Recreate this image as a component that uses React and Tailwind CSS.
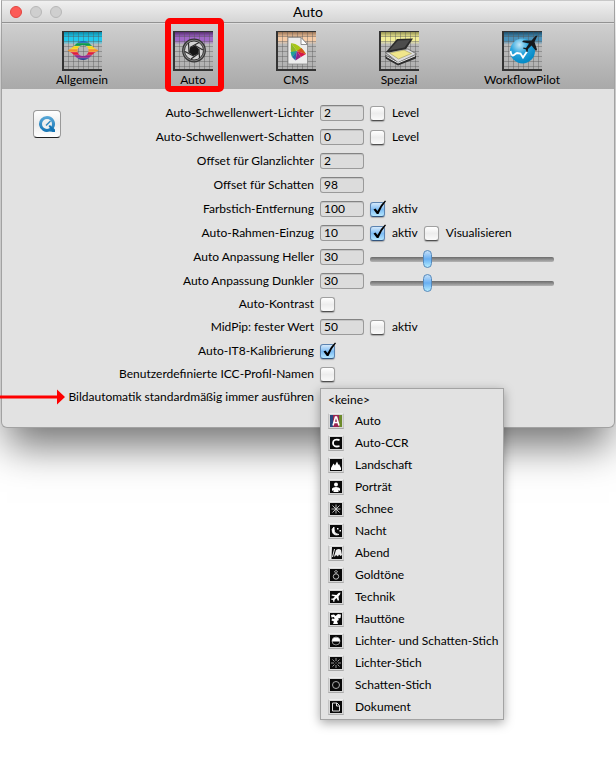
import React from "react";

function GridTile({ id, top, mid, children }) {
  return (
    <svg width="40" height="40" viewBox="0 0 40 40" aria-hidden="true" className="shrink-0">
      <defs>
        <linearGradient id={id} x1="0" y1="0" x2="0" y2="1">
          <stop offset="0" stopColor={top} />
          <stop offset="0.16" stopColor={mid} />
          <stop offset="0.24" stopColor={mid} />
          <stop offset="0.34" stopColor="#bababa" />
          <stop offset="1" stopColor="#b0b0b0" />
        </linearGradient>
      </defs>
      <rect width="40" height="40" fill={`url(#${id})`} />
      <path
        d="M6.500 0V40M11.500 0V40M16.500 0V40M21.500 0V40M26.500 0V40M31.500 0V40M36.500 0V40M0 5.500H40M0 10.500H40M0 15.500H40M0 20.500H40M0 25.500H40M0 30.500H40M0 35.500H40"
        stroke="#555"
        strokeOpacity="0.4"
      />
      <path d="M0 0H40V1H2V38H40V40H0Z" fill="#333" />
      {children}
    </svg>
  );
}

function EyeIcon() {
  return (
    <GridTile id="tile-eye" top="#087f9c" mid="#22c8ec">
      <clipPath id="eye-shape">
        <path d="M5.500 19.500Q10 17.500 13 14Q16.500 10 21 10Q25.500 10 29 14Q32 17.500 36.500 19.500Q32 21.500 29 25Q25.500 29 21 29Q16.500 29 13 25Q10 21.500 5.500 19.500Z" />
      </clipPath>
      <g clipPath="url(#eye-shape)">
        <rect x="5" y="9" width="32" height="3" fill="#1668b5" />
        <rect x="5" y="12" width="32" height="3" fill="#0b9a4d" />
        <rect x="5" y="15" width="32" height="3" fill="#f4d31c" />
        <rect x="5" y="18" width="32" height="3" fill="#f2902a" />
        <rect x="5" y="21" width="32" height="3" fill="#de1f3c" />
        <rect x="5" y="24" width="32" height="3" fill="#8d2a8e" />
        <rect x="5" y="27" width="32" height="4" fill="#2b3f94" />
        <path d="M5 12H37M5 15H37M5 18H37M5 21H37M5 24H37M5 27H37" stroke="#fff" strokeOpacity="0.4" strokeWidth="0.600" />
      </g>
      <circle cx="21" cy="19.500" r="5.500" fill="#b6b6b6" />
      <path d="M21.500 14V25M16.500 17V22M15.500 20.500H26.500M18 15.500H24" stroke="#555" strokeOpacity="0.4" />
    </GridTile>
  );
}

function ShutterIcon() {
  return (
    <GridTile id="tile-shutter" top="#4b2263" mid="#a068c8">
      <circle cx="21" cy="19.500" r="11.300" fill="#8a8a8a" stroke="#333" strokeWidth="1.200" />
      <circle cx="21" cy="19.500" r="9.500" fill="#d2d2d2" stroke="#333" strokeWidth="1" />
      <path d="M17 16.500L22 14.500L26 18L25.500 22.500L20.500 25L16 21.500Z" fill="#171717" />
      <path
        d="M17 16.500L26 11.500M22 14.500L30 19M26 18L26.500 27M25.500 22.500L18 28M20.500 25L12 20.500M16 21.500L15.500 12"
        stroke="#2a2a2a"
        strokeWidth="1.200"
      />
    </GridTile>
  );
}

function CmsIcon() {
  return (
    <GridTile id="tile-cms" top="#8a6547" mid="#f5cba6">
      <path d="M12 6.500H25L31.500 13.500V33H12Z" fill="#ececec" stroke="#8a8a8a" strokeWidth="0.800" />
      <path d="M25 6.500V13.500H31.500Z" fill="#fff" stroke="#777" strokeWidth="0.800" />
      <path d="M15 12Q24 13 30 23L21 20Z" fill="#a8c616" />
      <path d="M15 12L21 20L16 26Q14 19 15 12Z" fill="#8fb728" />
      <path d="M21 20L14.500 21L16 26Z" fill="#1ba39a" />
      <path d="M21 20L16 26L19.500 29.500Z" fill="#2469ae" />
      <path d="M21 20L19.500 29.500L25 26Z" fill="#922286" />
      <path d="M21 20L25 26L30 23Z" fill="#d91648" />
      <path d="M21 20L25.500 17L30 23Z" fill="#d9541e" />
    </GridTile>
  );
}

function ScannerIcon() {
  return (
    <GridTile id="tile-scanner" top="#858345" mid="#f2ee98">
      <path d="M6.500 24L19 31V34.500L6.500 27.500ZM19 31L37 24.500V27.500L19 34.500Z" fill="#2d2d2d" />
      <path d="M6.500 21.500L12 19L29 18L37.500 23L19 31.500Z" fill="#dedede" stroke="#555" strokeWidth="0.700" />
      <path d="M10.500 22L25 19L32.500 22.500L19.500 28Z" fill="#f0e68b" stroke="#8a864f" strokeWidth="0.500" />
      <path d="M7 21L18 8L34 7.500L27 18L10 21.500Z" fill="#2b2b2b" />
      <path d="M10 19.500L19 9.500L31 9L25.500 16.500Z" fill="#4c4c4c" />
      <path d="M7.500 25.500L19 32L36 25" stroke="#eee" fill="none" />
    </GridTile>
  );
}

function PilotIcon() {
  return (
    <GridTile id="tile-pilot" top="#14425d" mid="#4990b8">
      <radialGradient id="globe" cx="0.380" cy="0.250" r="0.700">
        <stop offset="0" stopColor="#c4e8f8" />
        <stop offset="0.500" stopColor="#2ba5dd" />
        <stop offset="1" stopColor="#078cc8" />
      </radialGradient>
      <circle cx="20.500" cy="20" r="12.500" fill="url(#globe)" />
      <path d="M8.500 20Q9.500 26 12 24T15 22L18.500 22.500L21 26.500L25 20.500" fill="none" stroke="#fff" strokeWidth="1.800" />
      <path
        d="M35.500 4.500L33.500 5L29.500 9.500L21.500 9.500L20 11L27 12.500L24 17L21.500 16.500L21 17.500L24 18.500L24.500 21L25.500 21L26 18L29.500 14.500L34 20L35 18.500L32.500 11Z"
        fill="#16191d"
      />
    </GridTile>
  );
}

const tabs = [
  { label: "Allgemein", icon: <EyeIcon />, width: "w-14" },
  { label: "Auto", icon: <ShutterIcon />, width: "w-10", marked: true },
  { label: "CMS", icon: <CmsIcon />, width: "w-10" },
  { label: "Spezial", icon: <ScannerIcon />, width: "w-10" },
  { label: "WorkflowPilot", icon: <PilotIcon />, width: "w-20" },
];

const presets = [
  {
    label: "Auto",
    glyph: (
      <>
        <path d="M0 0H4V12H0Z" fill="#28477e" />
        <path d="M3 0H9V12H3Z" fill="#9a2450" />
        <path d="M9 0H12V12H9Z" fill="#6d8b2b" />
        <path d="M3 10.500L5.500 2H6.500L9 10.500M4 7.500H8" fill="none" stroke="#fff" strokeWidth="1.600" />
      </>
    ),
  },
  { label: "Auto-CCR", glyph: <path d="M9.500 3Q3 1.500 3 6T9.500 9.200" fill="none" stroke="#fff" strokeWidth="1.800" /> },
  { label: "Landschaft", glyph: <path d="M1 11V9L3.500 4.500L5 6.500L7 2.500L8.500 6L9 5L11 9V11Z" fill="#fff" /> },
  {
    label: "Porträt",
    glyph: (
      <>
        <circle cx="6" cy="3.500" r="2" fill="#fff" />
        <path d="M2 10V7.500Q3 6 6 6T10 7.500V10L8.500 9V11H3.500V9Z" fill="#fff" />
      </>
    ),
  },
  { label: "Schnee", glyph: <path d="M6 1.500V10.500M1.500 6H10.500M2.500 2.500L9.500 9.500M9.500 2.500L2.500 9.500" stroke="#ccc" strokeWidth="0.900" /> },
  {
    label: "Nacht",
    glyph: (
      <>
        <path d="M4 2Q1 4 2.500 7.500T9 9.500Q5 9 4.500 6.500T4 2Z" fill="#fff" stroke="#fff" strokeWidth="0.800" />
        <path d="M7 3H8.500V4.500H7ZM9.500 5H11V6.500H9.500Z" fill="#fff" />
      </>
    ),
  },
  {
    label: "Abend",
    glyph: <path d="M0 0H2L1.500 12H0ZM4 2L5 2L3 10H2ZM6 3Q9 1 11 3L12 8L10.500 9L9 7.500L8 9.500L6 8L5 9.500H4Z" fill="#eee" />,
  },
  {
    label: "Goldtöne",
    glyph: (
      <>
        <circle cx="6" cy="7.500" r="2.700" fill="none" stroke="#bbb" />
        <path d="M4.500 2.500L6 1.500L7.500 2.500L6 4.500Z" fill="none" stroke="#bbb" strokeWidth="0.900" />
      </>
    ),
  },
  { label: "Technik", glyph: <path d="M10.500 1.500L8.500 2L6.500 4L2 3.500L1.500 4.500L5 5.500L3 7.500H1.500L1 8.500L3 9L3.500 11L4.500 10.500V9L6.500 7L8 10L9 9L8.500 5.500L10 3.500Z" fill="#fff" /> },
  {
    label: "Hauttöne",
    glyph: <path d="M1 2L4 1.500L5.500 3L8 1L11 1.500L10.500 5L8 5.500L9 7L7 8L8 11H3L4 8.500L1.500 7.500L2 5.500L4.500 6L4 4L1.500 4.500Z" fill="#fff" />,
  },
  {
    label: "Lichter- und Schatten-Stich",
    glyph: (
      <>
        <circle cx="6" cy="6" r="4" fill="none" stroke="#ccc" strokeWidth="0.700" />
        <path d="M2 6.500A4 4 0 0 1 10 6.500Z" fill="#fff" />
      </>
    ),
  },
  {
    label: "Lichter-Stich",
    glyph: (
      <path d="M6 1V4M6 8V11M1 6H4M8 6H11M2.500 2.500L4.500 4.500M7.500 7.500L9.500 9.500M9.500 2.500L7.500 4.500M4.500 7.500L2.500 9.500M5.500 6H6.500" stroke="#bbb" strokeWidth="0.800" />
    ),
  },
  { label: "Schatten-Stich", glyph: <circle cx="6" cy="6" r="3.500" fill="none" stroke="#bbb" strokeWidth="0.900" /> },
  { label: "Dokument", glyph: <path d="M2.500 2H7L9.500 4.500V10H2.500ZM6.500 2V5H9.500" fill="none" stroke="#ddd" /> },
];

function Check({ id, label, name, on }) {
  return (
    <span className="flex items-center gap-[7px]">
      <span className="relative flex">
        <input
          id={id}
          type="checkbox"
          defaultChecked={on}
          aria-label={label ? undefined : name}
          className="peer size-[15px] appearance-none rounded-[3px] border border-[#a0a0a0] border-b-[#505050] bg-linear-to-b from-white via-[#ededed] to-[#fafafa] shadow-[0_1px_1px_rgba(0,0,0,0.25)] checked:border-[#5c83b0] checked:border-b-[#33557f] checked:from-[#d5e9fb] checked:via-[#7dbcf3] checked:to-[#b5e6ff]"
        />
        <svg
          viewBox="0 0 17 17"
          aria-hidden="true"
          className="pointer-events-none absolute -top-0.5 left-0 hidden size-[17px] peer-checked:block"
        >
          <path d="M3.500 9.500L5.500 8.500L7.500 11Q10.500 4.500 15 0.500L16 1.300Q11.500 6.500 8.500 14H6.800Z" fill="#000" />
        </svg>
      </span>
      {label && <label htmlFor={id}>{label}</label>}
    </span>
  );
}

function Field({ id, value }) {
  return (
    <input
      id={id}
      type="text"
      defaultValue={value}
      className="h-4 w-11 rounded-[3px] border border-[#9a9a9a] border-t-[#838383] bg-[#dcdcdc] px-[3px] pb-0.5 text-[12px] leading-3 shadow-[inset_0_1px_0_#c4c4c4] outline-none"
    />
  );
}

function Slider({ name }) {
  return (
    <input
      type="range"
      min="0"
      max="100"
      defaultValue="30"
      aria-label={name}
      className="mt-1 h-[18px] w-[184px] appearance-none bg-transparent [&::-webkit-slider-runnable-track]:h-[5px] [&::-webkit-slider-runnable-track]:rounded-[2px] [&::-webkit-slider-runnable-track]:bg-linear-to-b [&::-webkit-slider-runnable-track]:from-[#6c6c6c] [&::-webkit-slider-runnable-track]:to-[#b5b5b5] [&::-webkit-slider-thumb]:-mt-[7px] [&::-webkit-slider-thumb]:h-[18px] [&::-webkit-slider-thumb]:w-[9px] [&::-webkit-slider-thumb]:appearance-none [&::-webkit-slider-thumb]:rounded-full [&::-webkit-slider-thumb]:border [&::-webkit-slider-thumb]:border-[#5589bb] [&::-webkit-slider-thumb]:bg-linear-to-b [&::-webkit-slider-thumb]:from-[#c4e0f9] [&::-webkit-slider-thumb]:via-[#68aff2] [&::-webkit-slider-thumb]:to-[#b3ecff]"
    />
  );
}

function Row({ label, htmlFor, short, children }) {
  return (
    <div className={`relative flex items-center ${short ? "h-[22px]" : "h-6"}`}>
      <label htmlFor={htmlFor} className="mr-1.5 w-[250px] shrink-0 text-right whitespace-nowrap">
        {label}
      </label>
      <div className="flex items-center gap-1.5">{children}</div>
    </div>
  );
}

function PresetMenu() {
  return (
    <ul
      id="preset"
      role="listbox"
      aria-label="Bildautomatik"
      className="absolute top-[3px] left-64 z-10 w-[184px] border border-[#a3a3a3] bg-[#e2e2e2] py-px shadow-[0_3px_10px_rgba(0,0,0,0.35)]"
    >
      <li role="option" aria-selected="false" className="flex h-5 items-center pl-[7px]">
        &lt;keine&gt;
      </li>
      {presets.map((p) => (
        <li key={p.label} role="option" aria-selected="false" className="flex h-[22px] items-center gap-[11px] pl-[7px] whitespace-nowrap">
          <span className="flex size-4 shrink-0 items-center justify-center border border-[#c4c4c4] border-t-[#eee] border-b-[#aaa] bg-[#d8d8d8]">
            <svg width="12" height="12" viewBox="0 0 12 12" aria-hidden="true">
              <rect width="12" height="12" fill="#0a0a0a" />
              {p.glyph}
            </svg>
          </span>
          {p.label}
        </li>
      ))}
    </ul>
  );
}

export default function App() {
  return (
    <div className="min-h-screen overflow-hidden bg-white px-px font-['Lato',sans-serif] text-[12px] leading-4 text-black">
      <div className="rounded-b-md border border-[#a2a2a2] border-t-[#c8c8c8] bg-[#e2e2e2] shadow-[0_24px_38px_-6px_rgba(0,0,0,0.55)]">
        <header className="relative flex h-[22px] items-center justify-center border-b border-[#929292] bg-linear-to-b from-[#f0f0f0] to-[#d5d5d5]">
          <div className="absolute left-2 flex gap-2">
            <button type="button" aria-label="Schließen" className="size-3 rounded-full border border-[#e2443f] bg-[#fc5b57]" />
            <button type="button" aria-label="Minimieren" className="size-3 rounded-full border border-[#b7b7b7] bg-[#cfcfcf]" />
            <button type="button" aria-label="Vergrößern" className="size-3 rounded-full border border-[#b7b7b7] bg-[#cfcfcf]" />
          </div>
          <h1 className="text-[14px]">Auto</h1>
        </header>

        <nav className="flex h-[66px] gap-[63px] border-t border-[#dedede] bg-linear-to-b from-[#cfcfcf] to-[#a9a9a9] pt-[7px] pl-[52px]">
          {tabs.map((t) => (
            <button key={t.label} type="button" className={`relative flex shrink-0 flex-col items-center gap-px ${t.width}`}>
              {t.icon}
              <span className="whitespace-nowrap">{t.label}</span>
              {t.marked && (
                <span className="absolute -top-[13px] -left-2 h-[74px] w-[59px] rounded-[5px] border-[6px] border-[#fe0000]" />
              )}
            </button>
          ))}
        </nav>

        <main className="relative flex pt-3 pb-[18px]">
          <div className="w-[62px] shrink-0 pt-[9px] pl-[31px]">
            <button
              type="button"
              aria-label="QuickTime"
              className="flex size-7 items-center justify-center rounded-[4px] border border-[#999] border-b-[#222] bg-linear-to-b from-white via-[#ececec] to-white"
            >
              <svg width="18" height="18" viewBox="0 0 18 18" aria-hidden="true">
                <linearGradient id="quicktime" x1="0" y1="0" x2="0" y2="1">
                  <stop offset="0" stopColor="#5aa9d8" />
                  <stop offset="1" stopColor="#1474b4" />
                </linearGradient>
                <path
                  fillRule="evenodd"
                  fill="url(#quicktime)"
                  d="M9 1A8 8 0 1 0 11.500 16.600L17 17V14.500L15.800 13.200A8 8 0 0 0 9 1ZM9 4A5 5 0 1 1 9 14A5 5 0 1 1 9 4Z"
                />
                <path d="M10.500 11L12 10L17 15.500V17H14.500Z" fill="#1474b4" />
                <path d="M8 10.500L12.500 6" stroke="#2c87bf" strokeWidth="1.500" />
              </svg>
            </button>
          </div>

          <form>
            <Row label="Auto-Schwellenwert-Lichter" htmlFor="lights">
              <Field id="lights" value="2" />
              <Check id="lights-level" label="Level" />
            </Row>
            <Row label="Auto-Schwellenwert-Schatten" htmlFor="shadows">
              <Field id="shadows" value="0" />
              <Check id="shadows-level" label="Level" />
            </Row>
            <Row label="Offset für Glanzlichter" htmlFor="offset-lights">
              <Field id="offset-lights" value="2" />
            </Row>
            <Row label="Offset für Schatten" htmlFor="offset-shadows">
              <Field id="offset-shadows" value="98" />
            </Row>
            <Row label="Farbstich-Entfernung" htmlFor="cast">
              <Field id="cast" value="100" />
              <Check id="cast-active" label="aktiv" on />
            </Row>
            <Row label="Auto-Rahmen-Einzug" htmlFor="frame">
              <Field id="frame" value="10" />
              <Check id="frame-active" label="aktiv" on />
              <Check id="frame-visual" label="Visualisieren" />
            </Row>
            <Row label="Auto Anpassung Heller" htmlFor="brighter">
              <Field id="brighter" value="30" />
              <Slider name="Auto Anpassung Heller" />
            </Row>
            <Row label="Auto Anpassung Dunkler" htmlFor="darker">
              <Field id="darker" value="30" />
              <Slider name="Auto Anpassung Dunkler" />
            </Row>
            <Row label="Auto-Kontrast" htmlFor="contrast" short>
              <Check id="contrast" name="Auto-Kontrast" />
            </Row>
            <Row label="MidPip: fester Wert" htmlFor="midpip">
              <Field id="midpip" value="50" />
              <Check id="midpip-active" label="aktiv" />
            </Row>
            <Row label="Auto-IT8-Kalibrierung" htmlFor="it8">
              <Check id="it8" name="Auto-IT8-Kalibrierung" on />
            </Row>
            <Row label="Benutzerdefinierte ICC-Profil-Namen" htmlFor="icc" short>
              <Check id="icc" name="Benutzerdefinierte ICC-Profil-Namen" />
            </Row>
            <Row label="Bildautomatik standardmäßig immer ausführen" htmlFor="preset">
              <svg width="65" height="16" viewBox="0 0 65 16" aria-hidden="true" className="absolute top-1 -left-16">
                <path d="M0 6.500H57V0.500L65 8L57 15.500V9.500H0Z" fill="#fe0000" />
              </svg>
              <PresetMenu />
            </Row>
          </form>
        </main>
      </div>
    </div>
  );
}
